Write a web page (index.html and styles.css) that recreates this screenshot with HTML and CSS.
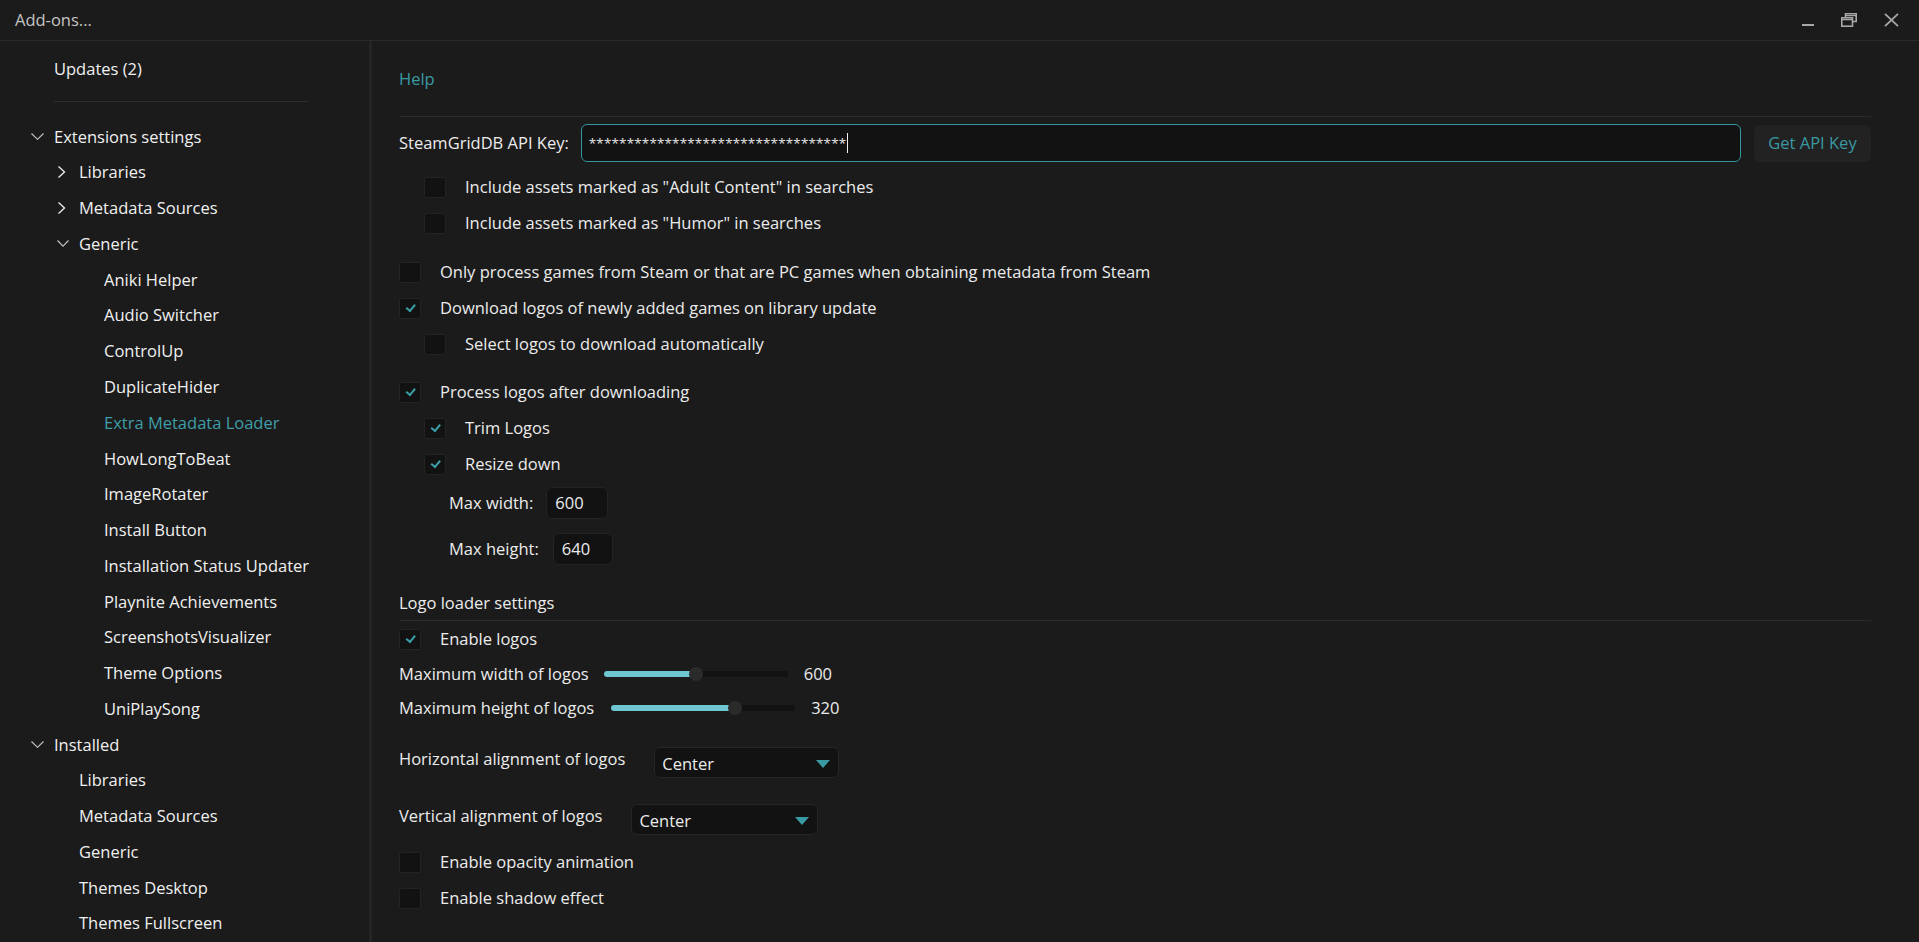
FILE: index.html
```html
<html>
  <head>
    <title>Add-ons...</title>
    <link rel="stylesheet" href="styles.css">
  </head>
  <body>
    <div class="titlebar">
      <span class="title">Add-ons...</span>
      <div class="win-controls">
        <svg width="12" height="14" viewBox="0 0 12 14"><rect x="0" y="11" width="12" height="2" fill="#a8a8a8"/></svg>
        <svg width="16" height="14" viewBox="0 0 16 14" fill="none" stroke="#a8a8a8" stroke-width="1.6">
          <path d="M4.5 4.5 V0.8 H15.2 V8.5 H11.5"/>
          <rect x="0.8" y="4.8" width="10.7" height="8.4"/>
          <path d="M0.8 6.6 H11.5 M4.5 2.6 H15.2" stroke-width="1.4"/>
        </svg>
        <svg width="15" height="14" viewBox="0 0 15 14" stroke="#a8a8a8" stroke-width="1.8"><path d="M1 0.8 L14 13.2 M14 0.8 L1 13.2"/></svg>
      </div>
    </div>

    <div class="layout">
      <div class="sidebar">
        <div class="nav-item lvl0"><span class="chev"></span>Updates (2)</div>
        <div class="nav-sep"></div>
        <div class="nav-item lvl0"><span class="chev"><svg width="13" height="7" viewBox="0 0 13 7"><path d="M0.5 0.5 L6.5 6.3 L12.5 0.5" fill="none" stroke="#c8c8c8" stroke-width="1.1"/></svg></span>Extensions settings</div>
        <div class="nav-item lvl1"><span class="chev"><svg class="right" width="9" height="12" viewBox="0 0 9 12"><path d="M1.5 0.5 L7.5 6 L1.5 11.5" fill="none" stroke="#e6e6e6" stroke-width="1.4"/></svg></span>Libraries</div>
        <div class="nav-item lvl1"><span class="chev"><svg class="right" width="9" height="12" viewBox="0 0 9 12"><path d="M1.5 0.5 L7.5 6 L1.5 11.5" fill="none" stroke="#e6e6e6" stroke-width="1.4"/></svg></span>Metadata Sources</div>
        <div class="nav-item lvl1"><span class="chev"><svg class="down" width="12" height="7" viewBox="0 0 12 7"><path d="M0.5 0.5 L6 6.2 L11.5 0.5" fill="none" stroke="#c8c8c8" stroke-width="1.1"/></svg></span>Generic</div>
        <div class="nav-item lvl2">Aniki Helper</div>
        <div class="nav-item lvl2">Audio Switcher</div>
        <div class="nav-item lvl2">ControlUp</div>
        <div class="nav-item lvl2">DuplicateHider</div>
        <div class="nav-item lvl2 active">Extra Metadata Loader</div>
        <div class="nav-item lvl2">HowLongToBeat</div>
        <div class="nav-item lvl2">ImageRotater</div>
        <div class="nav-item lvl2">Install Button</div>
        <div class="nav-item lvl2">Installation Status Updater</div>
        <div class="nav-item lvl2">Playnite Achievements</div>
        <div class="nav-item lvl2">ScreenshotsVisualizer</div>
        <div class="nav-item lvl2">Theme Options</div>
        <div class="nav-item lvl2">UniPlaySong</div>
        <div class="nav-item lvl0"><span class="chev"><svg width="13" height="7" viewBox="0 0 13 7"><path d="M0.5 0.5 L6.5 6.3 L12.5 0.5" fill="none" stroke="#c8c8c8" stroke-width="1.1"/></svg></span>Installed</div>
        <div class="nav-item lvl1"><span class="chev"></span>Libraries</div>
        <div class="nav-item lvl1"><span class="chev"></span>Metadata Sources</div>
        <div class="nav-item lvl1"><span class="chev"></span>Generic</div>
        <div class="nav-item lvl1"><span class="chev"></span>Themes Desktop</div>
        <div class="nav-item lvl1"><span class="chev"></span>Themes Fullscreen</div>
      </div>

      <div class="main">
        <div class="help">Help</div>
        <div class="rule rule-top"></div>

        <div class="api-row">
          <span>SteamGridDB API Key:</span>
          <div class="api-input">**********************************<span class="caret-line"></span></div>
          <div class="btn">Get API Key</div>
        </div>

        <div class="check-row indent gap-adult"><span class="box"></span>Include assets marked as "Adult Content" in searches</div>
        <div class="check-row indent"><span class="box"></span>Include assets marked as "Humor" in searches</div>

        <div class="check-row gap-group"><span class="box"></span>Only process games from Steam or that are PC games when obtaining metadata from Steam</div>
        <div class="check-row"><span class="box checked"></span>Download logos of newly added games on library update</div>
        <div class="check-row indent"><span class="box"></span>Select logos to download automatically</div>

        <div class="check-row gap-process"><span class="box checked"></span>Process logos after downloading</div>
        <div class="check-row indent"><span class="box checked"></span>Trim Logos</div>
        <div class="check-row indent"><span class="box checked"></span>Resize down</div>

        <div class="size-row first"><span>Max width:</span><div class="num w">600</div></div>
        <div class="size-row second"><span>Max height:</span><div class="num h">640</div></div>

        <div class="section-title">Logo loader settings</div>
        <div class="rule rule-section"></div>

        <div class="check-row"><span class="box checked"></span>Enable logos</div>

        <div class="slider-row">
          <span>Maximum width of logos</span>
          <div class="track"><div class="fill" style="width: 92px"></div><div class="thumb" style="left: 85px"></div></div>
          <span class="value">600</span>
        </div>
        <div class="slider-row second-slider">
          <span>Maximum height of logos</span>
          <div class="track"><div class="fill" style="width: 124px"></div><div class="thumb" style="left: 117px"></div></div>
          <span class="value">320</span>
        </div>

        <div class="select-row horiz">
          <span>Horizontal alignment of logos</span>
          <div class="select">Center<span class="tri"></span></div>
        </div>
        <div class="select-row vert">
          <span>Vertical alignment of logos</span>
          <div class="select">Center<span class="tri"></span></div>
        </div>

        <div class="check-row gap-anim"><span class="box"></span>Enable opacity animation</div>
        <div class="check-row"><span class="box"></span>Enable shadow effect</div>
      </div>
    </div>
  </body>
</html>
```

FILE: styles.css
```css
/* Base window */
body {
  margin: 0;
  height: 942px;
  overflow: hidden;
  background-color: #1b1b1b;
  color: #ececec;
  font-family: "Open Sans", "Noto Sans", sans-serif;
  font-size: 16.5px;
  line-height: 24px;
}

/* Title bar */
.titlebar {
  height: 40px;
  border-bottom: 1px solid #2a2a2a;
  display: flex;
  align-items: center;
  padding-left: 15px;
  padding-right: 20px;
}
.title {
  color: #c4c4c4;
}
.win-controls {
  margin-left: auto;
  display: flex;
  align-items: center;
}
.win-controls svg {
  display: block;
}
.win-controls svg + svg {
  margin-left: 27px;
}

.layout {
  display: flex;
  height: 901px;
}

/* Sidebar tree */
.sidebar {
  width: 369px;
  border-right: 3px solid #252525;
  padding-top: 10px;
}
.nav-item {
  height: 35.77px;
  display: flex;
  align-items: center;
  color: #f0f0f0;
  white-space: nowrap;
}
.nav-item.lvl0 {
  padding-left: 31px;
}
.nav-item.lvl1 {
  padding-left: 56px;
}
.nav-item.lvl2 {
  padding-left: 104px;
}
.nav-item.active {
  color: #3f9ea8;
}
.chev {
  width: 23px;
  display: flex;
  align-items: center;
}
.chev svg {
  display: block;
}
.chev .right,
.chev .down {
  margin-left: 1px;
}
.nav-sep {
  height: 1px;
  background-color: #2e2e2e;
  margin: 14px 0 17px 54px;
  width: 254px;
}

/* Main settings panel */
.main {
  flex: 1;
  padding: 26px 48px 0 27px;
}
.help {
  color: #3a9aa3;
}
.rule {
  height: 1px;
  background-color: #2c2c2c;
}
.rule-top {
  margin-top: 25px;
}
.rule-section {
  margin-top: 5px;
}

.api-row {
  margin-top: 7px;
  height: 38px;
  display: flex;
  align-items: center;
}
.api-input {
  flex: 1;
  margin-left: 12px;
  height: 38px;
  box-sizing: border-box;
  border: 1px solid #3595a0;
  border-radius: 6px;
  background-color: #121212;
  padding-left: 7px;
  display: flex;
  align-items: center;
  font-size: 13.4px;
  letter-spacing: 0.2px;
  color: #e8e8e8;
}
.caret-line {
  width: 1px;
  height: 20px;
  background-color: #f0f0f0;
  margin-left: 1px;
}
.btn {
  margin-left: 13px;
  width: 117px;
  height: 37px;
  border-radius: 6px;
  background-color: #222;
  color: #3a98a1;
  display: flex;
  align-items: center;
  justify-content: center;
}

/* Checkboxes */
.check-row {
  height: 36px;
  display: flex;
  align-items: center;
  white-space: nowrap;
}
.check-row.indent {
  padding-left: 25px;
}
.box {
  width: 22px;
  height: 21px;
  box-sizing: border-box;
  background-color: #121212;
  border: 1px solid #232323;
  border-radius: 2px;
  margin-right: 19px;
  flex: none;
  position: relative;
}
.box.checked::after {
  content: "";
  position: absolute;
  left: 6px;
  top: 5px;
  width: 7px;
  height: 3.5px;
  border-left: 2px solid #3b9ea7;
  border-bottom: 2px solid #3b9ea7;
  transform: rotate(-50deg);
}
.gap-adult {
  margin-top: 7px;
}
.gap-group {
  margin-top: 13px;
}
.gap-process {
  margin-top: 12px;
}
.gap-anim {
  margin-top: 9px;
}

/* Max width / height */
.size-row {
  display: flex;
  align-items: center;
  height: 32px;
  padding-left: 50px;
}
.size-row.first {
  margin-top: 5px;
}
.size-row.second {
  margin-top: 14px;
}
.num {
  height: 32px;
  box-sizing: border-box;
  background-color: #121212;
  border: 1px solid #232323;
  border-radius: 6px;
  padding-left: 8px;
  display: flex;
  align-items: center;
}
.num.w {
  width: 62px;
  margin-left: 13px;
}
.num.h {
  width: 60px;
  margin-left: 14px;
}

.section-title {
  margin-top: 26px;
}

/* Sliders */
.slider-row {
  height: 34px;
  display: flex;
  align-items: center;
}
.track {
  position: relative;
  width: 184px;
  height: 6px;
  border-radius: 3px;
  background-color: #121212;
  margin-left: 15px;
}
.second-slider .track {
  margin-left: 17px;
}
.fill {
  height: 6px;
  border-radius: 3px;
  background-color: #6fc7d1;
}
.thumb {
  position: absolute;
  top: -4px;
  width: 14px;
  height: 14px;
  border-radius: 50%;
  background-color: #2b2b2b;
}
.value {
  margin-left: 16px;
}

/* Dropdowns */
.select-row {
  display: flex;
  align-items: flex-start;
}
.select-row.horiz {
  margin-top: 22px;
}
.select-row.vert {
  margin-top: 26px;
}
.select {
  height: 31px;
  box-sizing: border-box;
  background-color: #121212;
  border: 1px solid #262626;
  border-radius: 6px;
  padding: 3px 0 0 7px;
  display: flex;
  align-items: center;
  position: relative;
}
.horiz .select {
  width: 185px;
  margin-left: 29px;
}
.vert .select {
  width: 187px;
  margin-left: 29px;
}
.tri {
  position: absolute;
  right: 8px;
  top: 12px;
  width: 0;
  height: 0;
  border-left: 7.5px solid transparent;
  border-right: 7.5px solid transparent;
  border-top: 8px solid #3a9aa3;
}
```
